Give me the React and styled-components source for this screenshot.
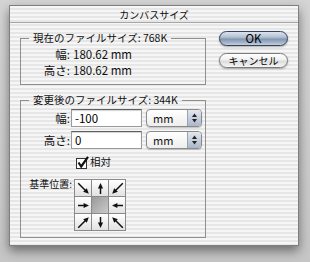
import React from 'react'
import styled, { createGlobalStyle } from 'styled-components'

const GlobalStyle = createGlobalStyle`
  html, body {
    margin:0;
    padding:0;
  }
  body {
    background:#cdcdcd;
    font-family:"Noto Sans CJK JP", sans-serif;
  }
`
const Page = styled.div`
  width:310px;
  height:262px;
  box-sizing:border-box;
  padding:5px 11px 0 9px;
  background:linear-gradient(#d4d4d4, #c6c6c6);
  overflow:hidden;
`
const Window = styled.div`
  width:290px;
  height:241px;
  box-sizing:border-box;
  border:1px solid #7f7f7f;
  background:repeating-linear-gradient(to bottom, #f6f6f6 0 2px, #e6e6e6 2px 4px);
  box-shadow:0 5px 10px rgba(0,0,0,0.45);
  display:flex;
  flex-direction:column;
`
const TitleBar = styled.div`
  height:16px;
  border-bottom:1px solid #a6a6a6;
  display:flex;
  align-items:center;
  justify-content:center;
  font-size:10px;
  color:#111;
`
const Body = styled.div`
  flex:1;
  display:flex;
  padding:8px 0 0 10px;
`
const LeftCol = styled.div`
  width:186px;
  display:flex;
  flex-direction:column;
`
const RightCol = styled.div`
  margin-left:13px;
  display:flex;
  flex-direction:column;
  gap:7px;
`
const Group = styled.fieldset`
  margin:${(p) => p.$top || 0}px 0 0 0;
  padding:${(p) => p.$pad};
  border:1px solid #8f8f8f;
  min-width:0;
  font-size:11.5px;
  color:#111;
`
const Legend = styled.legend`
  margin-left:8px;
  padding:0 4px;
  line-height:14px;
  font-size:10.5px;
`
const InfoRow = styled.div`
  display:flex;
  align-items:center;
  height:16px;
`
const FieldRow = styled.div`
  display:flex;
  align-items:center;
  margin-top:${(p) => p.$top}px;
`
const Label = styled.span`
  width:50px;
  box-sizing:border-box;
  padding-right:1px;
  text-align:right;
  line-height:14px;
  white-space:nowrap;
`
const AnchorLabel = styled(Label)`
  width:51px;
  padding-right:0;
  margin-top:-2px;
`
const Value = styled.span`
  margin-left:2px;
  line-height:14px;
`
const TextField = styled.input`
  width:71px;
  height:18px;
  box-sizing:border-box;
  margin:0 4px 0 0;
  padding:0 3px;
  border:1px solid #9a9a9a;
  border-top-color:#5f5f5f;
  box-shadow:inset 0 1px 1px rgba(0,0,0,0.18);
  background:#fff;
  font-family:"Noto Sans CJK JP", sans-serif;
  font-size:11.5px;
  color:#000;
  outline:none;
`
const Select = styled.div`
  width:56px;
  height:18px;
  box-sizing:border-box;
  border:1px solid #8a8a8a;
  border-radius:4px;
  background:linear-gradient(#ffffff, #eeeeee);
  box-shadow:0 1px 1px rgba(0,0,0,0.2);
  display:flex;
  overflow:hidden;
`
const SelectText = styled.span`
  flex:1;
  padding-left:6px;
  line-height:16px;
  font-size:11px;
`
const Stepper = styled.span`
  width:13px;
  background:linear-gradient(#e2e8f0, #aab7ca);
  border-left:1px solid #9aa3b0;
  display:flex;
  align-items:center;
  justify-content:center;
`
const CheckRow = styled.div`
  display:flex;
  align-items:center;
  margin:6px 0 0 55px;
  gap:1px;
  line-height:14px;
  font-size:10.5px;
`
const AnchorRow = styled.div`
  display:flex;
  align-items:flex-start;
  margin-top:10px;
  font-size:10px;
`
const AnchorGrid = styled.div`
  margin-left:2px;
  display:grid;
  grid-template-columns:repeat(3, 16px);
  grid-auto-rows:16px;
  gap:1px;
  padding:1px;
  background:#8a8a8a;
`
const Cell = styled.div`
  background:${(p) => (p.$center
    ? 'linear-gradient(135deg, #9a9a9a, #c9c9c9)'
    : 'linear-gradient(#ffffff, #e2e2e2)')};
  display:flex;
  align-items:center;
  justify-content:center;
`
const ArrowSvg = styled.svg`
  flex:none;
  transform:rotate(${(p) => p.$deg}deg);
`
const Button = styled.button`
  width:69px;
  height:15px;
  box-sizing:border-box;
  padding:0;
  border-radius:8px;
  border:1px solid ${(p) => (p.$primary ? '#33435b' : '#7a7a7a')};
  background:${(p) => (p.$primary
    ? 'linear-gradient(#dce3ec 0%, #b2c0d2 40%, #8497b1 55%, #a9b8cc 85%, #c6d1de 100%)'
    : 'linear-gradient(#ffffff 0%, #f0f0f0 45%, #dcdcdc 55%, #f6f6f6 100%)')};
  box-shadow:0 1px 2px rgba(0,0,0,0.3);
  font-family:"Noto Sans CJK JP", sans-serif;
  font-size:${(p) => (p.$primary ? 11.5 : 10)}px;
  line-height:13px;
  color:#000;
`

function Arrow({ deg }) {
  const diag = deg % 90 !== 0
  const s = diag ? 17 : 13
  return (
    <ArrowSvg $deg={deg} width={s} height={s} viewBox={`0 0 ${s} ${s}`}>
      <line x1={s / 2} y1={s - 1} x2={s / 2} y2="5" stroke="#111" strokeWidth="1.5" />
      <polygon points={`${s / 2},1 ${s / 2 - 2.6},6.4 ${s / 2 + 2.6},6.4`} fill="#111" />
    </ArrowSvg>
  )
}

function UpDown() {
  return (
    <svg width="7" height="10" viewBox="0 0 7 10">
      <polygon points="3.5,0.5 6,4 1,4" fill="#222" />
      <polygon points="3.5,9.5 6,6 1,6" fill="#222" />
    </svg>
  )
}

const anchors = [135, 0, 225, 90, null, 270, 45, 180, 315]

function App() {
  return (
    <Page>
      <GlobalStyle />
      <Window>
        <TitleBar>カンバスサイズ</TitleBar>
        <Body>
          <LeftCol>
            <Group $pad="1px 0 6px 0">
              <Legend>現在のファイルサイズ: 768K</Legend>
              <InfoRow>
                <Label>幅:</Label>
                <Value>180.62 mm</Value>
              </InfoRow>
              <InfoRow>
                <Label>高さ:</Label>
                <Value>180.62 mm</Value>
              </InfoRow>
            </Group>
            <Group $top={8} $pad="0 0 6px 0">
              <Legend>変更後のファイルサイズ: 344K</Legend>
              <FieldRow $top={2}>
                <Label>幅:</Label>
                <TextField defaultValue="-100" />
                <Select>
                  <SelectText>mm</SelectText>
                  <Stepper><UpDown /></Stepper>
                </Select>
              </FieldRow>
              <FieldRow $top={4}>
                <Label>高さ:</Label>
                <TextField defaultValue="0" />
                <Select>
                  <SelectText>mm</SelectText>
                  <Stepper><UpDown /></Stepper>
                </Select>
              </FieldRow>
              <CheckRow>
                <svg width="13" height="13" viewBox="0 0 13 13">
                  <rect x="0.5" y="2.5" width="10" height="10" fill="#fff" stroke="#333" />
                  <path d="M2.5 6.5 L5.2 10.5 L12 0.8" fill="none" stroke="#111" strokeWidth="2.2" />
                </svg>
                <span>相対</span>
              </CheckRow>
              <AnchorRow>
                <AnchorLabel>基準位置:</AnchorLabel>
                <AnchorGrid>
                  {anchors.map((deg, i) => (
                    <Cell key={i} $center={deg === null}>
                      {deg !== null && <Arrow deg={deg} />}
                    </Cell>
                  ))}
                </AnchorGrid>
              </AnchorRow>
            </Group>
          </LeftCol>
          <RightCol>
            <Button $primary>OK</Button>
            <Button>キャンセル</Button>
          </RightCol>
        </Body>
      </Window>
    </Page>
  )
}

export default App
